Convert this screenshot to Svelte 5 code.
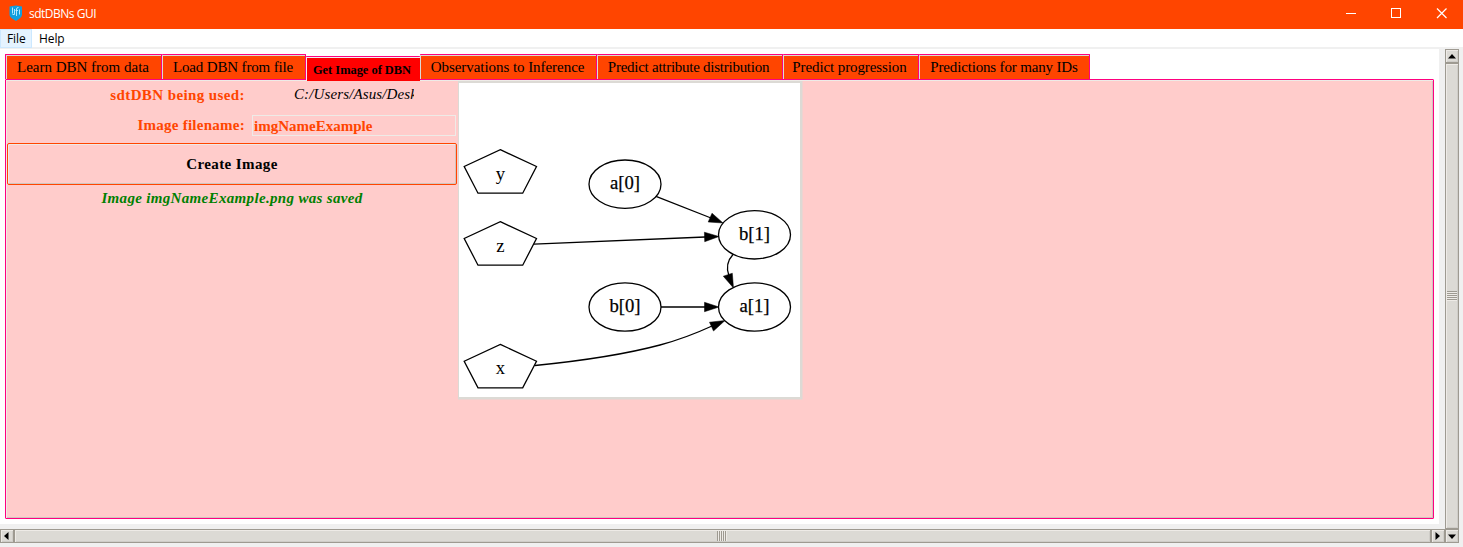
<script>
  const tabs = [
    { label: 'Learn DBN from data', width: 157, spacing: 0, shift: -1 },
    { label: 'Load DBN from file', width: 144, spacing: -0.15, shift: -1 },
    { label: 'Get Image of DBN', width: 114, spacing: 0, shift: -2, active: true },
    { label: 'Observations to Inference', width: 177, spacing: -0.05, shift: -1 },
    { label: 'Predict attribute distribution', width: 186, spacing: -0.26, shift: -2 },
    { label: 'Predict progression', width: 136, spacing: -0.1, shift: -2 },
    { label: 'Predictions for many IDs', width: 171, spacing: -0.16, shift: 0 }
  ];
  const pentagons = [
    { label: 'y', y: 149.7 },
    { label: 'z', y: 221.7 },
    { label: 'x', y: 344.4 }
  ];
  const ellipses = [
    { label: 'a[0]', x: 625, y: 184.2 },
    { label: 'b[1]', x: 754.5, y: 234.8 },
    { label: 'b[0]', x: 625, y: 307 },
    { label: 'a[1]', x: 754.5, y: 307 }
  ];
</script>

<div class="window">
  <header class="titlebar">
    <svg class="logo" width="14" height="17" viewBox="0 0 14 17">
      <path d="M.5 1.500L7 .5L13 1.500V10Q13 12.500 7 16Q.5 12.500 .5 10Z" fill="#119fdf" />
      <path d="M3.500 2.500V8.500M5.500 4V9.500H3.500M7.500 11V4Q7.500 2.500 9.500 2.500M6.500 5.500H9M10.500 4.500V9.500" fill="none" stroke="#c5edff" stroke-width=".9" />
    </svg>
    <span class="title">sdtDBNs GUI</span>
    <svg class="controls" width="138" height="29" viewBox="1325 0 138 29" fill="none" stroke="#fff">
      <path d="M1346 13.500H1356" />
      <rect x="1391.500" y="8.500" width="9" height="9" />
      <path d="M1437 8.500L1446.500 18M1446.500 8.500L1437 18" stroke-width="1.200" />
    </svg>
  </header>
  <nav class="menu"><span class="item hover">File</span><span class="item">Help</span></nav>

  <div class="body">
    <div class="left">
      <main>
        <div class="tabs">
          {#each tabs as tab}
            <div class="tab" class:active={tab.active} style="width:{tab.width}px;letter-spacing:{tab.spacing}px;text-indent:{tab.shift}px"><span>{tab.label}</span></div>
          {/each}
        </div>
        <section class="panel">
          <div class="form">
            <div class="row first">
              <span class="label used">sdtDBN being used:</span>
              <span class="path">C:/Users/Asus/Desk</span>
            </div>
            <div class="row second">
              <span class="label">Image filename:</span>
              <div class="entry">imgNameExample</div>
            </div>
            <div class="button">Create Image</div>
            <div class="status">Image imgNameExample.png was saved</div>
          </div>
          <svg class="graph" width="345" height="319" viewBox="458 81 345 319">
            <rect x="458" y="81" width="344.500" height="318.500" fill="#dcdad5" />
            <rect x="459" y="83" width="341" height="314" fill="#fff" />
            <g fill="none" stroke="#000" stroke-width="1.300">
              {#each pentagons as p}
                <path d="M500.300 {p.y}L536.500 {p.y + 16.8}L522.700 {p.y + 43.5}H478L464.200 {p.y + 16.8}Z" />
              {/each}
              {#each ellipses as e}
                <ellipse cx={e.x} cy={e.y} rx="36" ry="24.200" />
              {/each}
              <path d="M656 196.300L711 218" />
              <path d="M534 244.200L705 237" />
              <path d="M733 254.500C727 261 726 268 729 276" />
              <path d="M661 307H705" />
              <path d="M535 365.500C580 361 630 353 660 345Q686 338 712 326" />
            </g>
            <g fill="#000" stroke="#000" stroke-width=".5">
              <path d="M723 223L708.200 222L712 213.200Z" />
              <path d="M719 236.500L704.700 241.700L704.400 232.200Z" />
              <path d="M733.500 288L723.300 276.200L732.300 273.200Z" />
              <path d="M719 307L704.500 311.700V302.300Z" />
              <path d="M725 320.500L713.500 331L709.500 322.200Z" />
            </g>
            <g class="names">
              {#each pentagons as p}<text x="500.300" y={p.y + 30}>{p.label}</text>{/each}
              {#each ellipses as e}<text class="state" x={e.x} y={e.y + 5.2}>{e.label}</text>{/each}
            </g>
          </svg>
        </section>
      </main>
      <div class="hbar">
        <div class="arrow"><svg width="5" height="8"><path d="M4.500 0V8L0 4Z" /></svg></div>
        <div class="thumb"><i></i></div>
        <div class="arrow"><svg width="5" height="8"><path d="M.5 0V8L5 4Z" /></svg></div>
      </div>
    </div>
    <div class="vbar">
      <div class="arrow"><svg width="8" height="5"><path d="M0 4.500H8L4 0Z" /></svg></div>
      <div class="thumb"><i></i></div>
      <div class="arrow"><svg width="8" height="5"><path d="M0 .5H8L4 5Z" /></svg></div>
    </div>
  </div>
</div>

<style>
  :global(body) { background: #f0f0f0; }
  .window, .window * { box-sizing: border-box; }
  .window { width: 1463px; height: 547px; display: flex; flex-direction: column; overflow: hidden; background: #f0f0f0; font: 15px "Liberation Serif", serif; white-space: nowrap; color: #000; }
  svg { display: block; flex: none; }
  .titlebar { height: 29px; flex: none; display: flex; align-items: flex-start; background: #ff4500; color: #fff; }
  .logo { margin: 5px 0 0 9px; }
  .title { margin-left: 6px; font: 12px/28px "Open Sans", sans-serif; letter-spacing: -.5px; }
  .controls { margin-left: auto; }
  .menu { height: 20px; flex: none; display: flex; background: #fff; border-bottom: 2px solid #f0f0f0; font: 12px/19px "Open Sans", sans-serif; }
  .item { height: 19px; padding: 0 7px; letter-spacing: -.1px; }
  .hover { width: 32px; padding: 0 6px; background: #e5f3ff; border: 1px solid #cce8ff; line-height: 17px; }
  .body { flex: 1; display: flex; }
  .left { width: 1445px; display: flex; flex-direction: column; }
  main { width: 1439px; height: 475px; padding: 5px 5px 0; background: #fff; }
  .tabs { height: 25px; padding-left: 1px; display: flex; align-items: flex-start; }
  .tab { height: 25px; flex: none; background: #ff4500; border-top: 1px solid #ff007f; border-right: 1px solid #ff007f; box-shadow: inset 1px 1px #dcdad5; border-radius: 1px 1px 0 0; text-align: center; line-height: 25px; }
  .tab:first-child { border-left: 1px solid #ff007f; margin-left: -1px; }
  .tab.active { position: relative; height: 25px; margin-top: 2px; background: #f00; border-right: 0; font-size: 12.400px; font-weight: bold; line-height: 26px; box-shadow: inset 1px 1px #eee; }
  .panel { width: 1429px; height: 440px; display: flex; align-items: flex-start; background: #ffcccb; border: 1px solid #ff007f; box-shadow: inset 1px 1px #eeebe7, inset -1px -1px #cfc5bf; border-radius: 1px; padding: 1px 0 0 1px; }
  .form { width: 451px; height: 140px; flex: none; }
  .row { display: flex; align-items: center; }
  .first { height: 29px; padding-bottom: 2px; }
  .second { height: 33px; padding-bottom: 2px; }
  .label { width: 238px; text-align: right; color: #ff4500; font-weight: bold; letter-spacing: .26px; }
  .used { padding-top: 2px; letter-spacing: .4px; }
  .path { margin-left: 49px; width: 120px; overflow: hidden; font-style: italic; letter-spacing: .12px; }
  .entry { width: 204px; height: 21px; margin-left: 7px; padding-left: 1px; border: 1px solid #eeebe7; color: #ff4500; font-weight: bold; line-height: 20px; }
  .button { width: 450px; height: 42px; border: 1px solid #ff4500; border-radius: 2px; box-shadow: inset 1px 1px #eeebe7, inset -1px -1px #cfc5bf; text-align: center; font-weight: bold; letter-spacing: .4px; line-height: 40px; }
  .status { width: 450px; text-align: center; color: #008000; letter-spacing: .33px; font-weight: bold; font-style: italic; line-height: 27px; }
  .names { font-size: 18.700px; text-anchor: middle; }
  .state { stroke: #000; stroke-width: .25px; }
  .hbar { width: 1445px; height: 14px; margin-top: 5px; display: flex; border: 1px solid #9e9a91; background: #9e9a91; gap: 2px; }
  .vbar { width: 14px; height: 494px; display: flex; flex-direction: column; gap: 2px; border: 1px solid #9e9a91; background: #9e9a91; }
  .arrow { flex: none; display: flex; align-items: center; justify-content: center; width: 12px; height: 12px; background: #dcdad5; box-shadow: inset 1px 1px #eeebe7, inset -1px -1px #cfcdc8; }
  .hbar .arrow svg { margin-right: 1px; }
  .thumb { flex: 1; display: flex; align-items: center; justify-content: center; background: #dcdad5; box-shadow: inset 1px 1px #eeebe7, inset -1px -1px #cfcdc8; }
  .hbar i { width: 10px; height: 10px; margin-right: 1px; background: repeating-linear-gradient(90deg, #9e9a91 0 1px, #eeebe7 1px 2px); }
  .vbar i { width: 10px; height: 10px; background: repeating-linear-gradient(#9e9a91 0 1px, #eeebe7 1px 2px); }
</style>
